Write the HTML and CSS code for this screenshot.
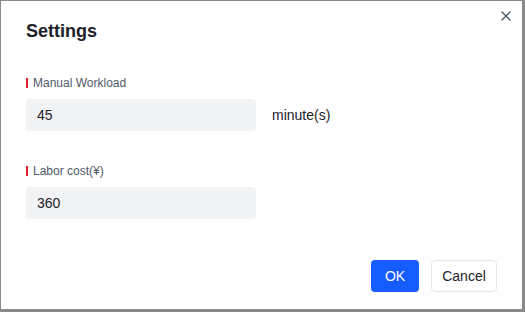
FILE: index.html
```html
<!DOCTYPE html>
<html lang="en">
<head>
    <meta charset="UTF-8">
    <meta name="viewport" content="width=device-width, initial-scale=1.0">
    <title>Settings</title>
    <link rel="stylesheet" href="styles.css">
</head>
<body>
    <div class="dialog">
        <div class="dialog-header">
            <div class="dialog-title">Settings</div>
            <div class="close-btn">
                <svg width="10" height="10" viewBox="0 0 10 10">
                    <path d="M0.5 0.5 L9.5 9.5 M9.5 0.5 L0.5 9.5" stroke="#4e5969" stroke-width="1.3" fill="none"/>
                </svg>
            </div>
        </div>
        <div class="dialog-body">
            <div class="form-item">
                <div class="form-label"><span class="mark"></span>Manual Workload</div>
                <div class="form-row">
                    <div class="input">45</div>
                    <span class="suffix">minute(s)</span>
                </div>
            </div>
            <div class="form-item">
                <div class="form-label"><span class="mark"></span>Labor cost(¥)</div>
                <div class="form-row">
                    <div class="input">360</div>
                </div>
            </div>
        </div>
        <div class="dialog-footer">
            <button class="btn btn-primary">OK</button>
            <button class="btn btn-default">Cancel</button>
        </div>
    </div>
</body>
</html>
```

FILE: styles.css
```css
html, body {
    margin: 0;
    padding: 0;
}
body {
    width: 525px;
    height: 312px;
    background: #8a8a8a;
    font-family: "Liberation Sans", Arial, sans-serif;
    color: #1d2129;
    overflow: hidden;
}
.dialog {
    position: relative;
    margin: 1px 0 0 1px;
    width: 521px;
    height: 308px;
    background: #fff;
    box-sizing: border-box;
    padding: 0 25px;
    display: flex;
    flex-direction: column;
}
.dialog-header {
    padding-top: 18px;
}
.dialog-title {
    font-size: 18px;
    font-weight: bold;
    line-height: 24px;
    color: #1d2129;
}
.close-btn {
    position: absolute;
    top: 10px;
    right: 11px;
    width: 10px;
    height: 10px;
    cursor: pointer;
}
.close-btn svg {
    display: block;
}
.dialog-body {
    padding-top: 30px;
}
.form-item {
    margin-bottom: 30px;
}
.form-item:last-child {
    margin-bottom: 0;
}
.form-label {
    display: flex;
    align-items: center;
    font-size: 12px;
    line-height: 20px;
    color: #4e5969;
    margin-bottom: 6px;
}
.mark {
    width: 2px;
    height: 10px;
    background: #e5202e;
    margin-right: 5px;
}
.form-row {
    display: flex;
    align-items: center;
}
.input {
    width: 230px;
    height: 32px;
    box-sizing: border-box;
    padding: 0 11px;
    background: #f2f3f5;
    border-radius: 4px;
    font-size: 14px;
    line-height: 32px;
    color: #1d2129;
}
.suffix {
    margin-left: 16px;
    font-size: 14px;
    color: #1d2129;
}
.dialog-footer {
    margin-top: 41px;
    display: flex;
    justify-content: flex-end;
    gap: 12px;
}
.btn {
    height: 32px;
    box-sizing: border-box;
    border-radius: 4px;
    font-family: inherit;
    font-size: 14px;
    cursor: pointer;
    padding: 0;
}
.btn-primary {
    width: 48px;
    background: #165dff;
    border: none;
    color: #fff;
}
.btn-default {
    width: 66px;
    background: #fff;
    border: 1px solid #e5e6eb;
    color: #1d2129;
}
```
